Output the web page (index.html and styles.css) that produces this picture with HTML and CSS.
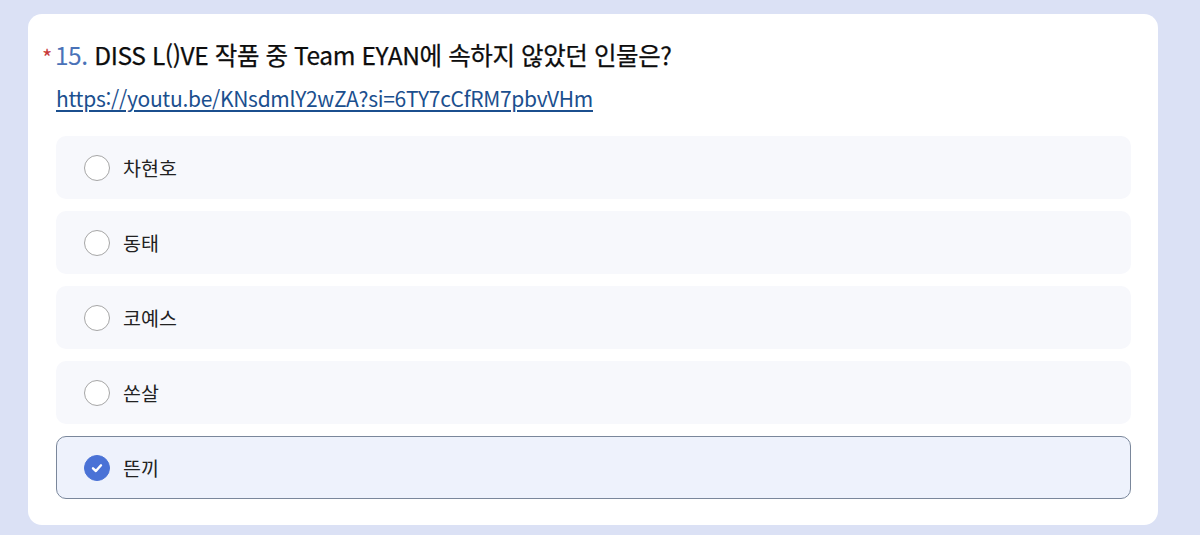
FILE: index.html
```html
<!DOCTYPE html>
<html lang="ko">
<head>
<meta charset="utf-8">
<link rel="stylesheet" href="styles.css">
</head>
<body>
<div class="page">
  <div class="card">
    <h2 class="title"><span class="req">*</span><span class="num">15.</span> DISS L()VE 작품 중 Team EYAN에 속하지 않았던 인물은?</h2>
    <a class="link" href="#">https://youtu.be/KNsdmlY2wZA?si=6TY7cCfRM7pbvVHm</a>
    <div class="options">
      <div class="option"><span class="radio"></span><span class="label">차현호</span></div>
      <div class="option"><span class="radio"></span><span class="label">동태</span></div>
      <div class="option"><span class="radio"></span><span class="label">코예스</span></div>
      <div class="option"><span class="radio"></span><span class="label">쏜살</span></div>
      <div class="option selected"><span class="radio checked"><svg width="14" height="14" viewBox="0 0 14 14"><path d="M3 7.3 L5.9 10 L11 4.3" fill="none" stroke="#fff" stroke-width="2.4" stroke-linecap="round" stroke-linejoin="round"/></svg></span><span class="label">뜬끼</span></div>
    </div>
  </div>
</div>
</body>
</html>
```
FILE: styles.css
```css
* { box-sizing: border-box; }
html, body { margin: 0; padding: 0; }
body {
  background: #dbe1f5;
  font-family: "Noto Sans CJK KR", "Noto Sans", sans-serif;
  width: 1200px;
  height: 535px;
  overflow: hidden;
}
.page {
  padding: 14px 42px 0 28px;
}
.card {
  background: #ffffff;
  border-radius: 14px;
  padding: 22px 27px 27px 28px;
  height: 511px;
}
.title {
  margin: 0;
  font-size: 24.5px;
  font-weight: 400;
  line-height: 38px;
  color: #0d0d0d;
  letter-spacing: -0.4px;
  -webkit-text-stroke: 0.25px #0d0d0d;
}
.req {
  color: #c83a3a;
  font-size: 22px;
  margin-left: -14px;
  margin-right: 3px;
  font-weight: 400;
  vertical-align: -1px;
  -webkit-text-stroke: 0;
}
.num {
  color: #4a72b8;
  font-weight: 400;
  -webkit-text-stroke: 0;
}
.link {
  display: inline-block;
  margin-top: 9px;
  font-size: 21px;
  line-height: 28px;
  color: #1b4f8e;
  text-decoration: underline;
  text-underline-offset: 3px;
  letter-spacing: -0.3px;
}
.options {
  margin-top: 24px;
  display: flex;
  flex-direction: column;
  gap: 12px;
}
.option {
  height: 63px;
  border-radius: 10px;
  background: #f7f8fc;
  display: flex;
  align-items: center;
  padding-left: 27px;
  gap: 13px;
  border: 1px solid transparent;
}
.option.selected {
  background: #eef2fc;
  border-color: #7a879b;
}
.radio {
  width: 26px;
  height: 26px;
  border-radius: 50%;
  border: 1.5px solid #a6a6a6;
  background: #fff;
  display: flex;
  align-items: center;
  justify-content: center;
  flex: none;
}
.radio.checked {
  background: #4a72d6;
  border-color: #4a72d6;
}
.label {
  font-size: 19.5px;
  color: #222;
  line-height: 26px;
}
```
